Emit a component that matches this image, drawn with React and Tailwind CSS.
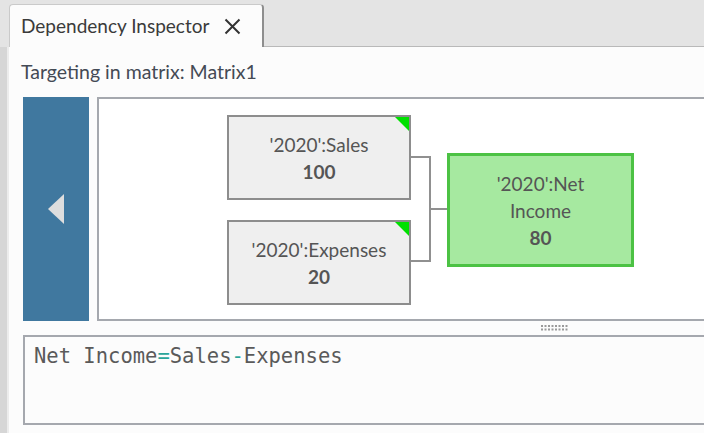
import React from 'react';

const ui = "font-['Lato','Liberation_Sans',sans-serif]";

// one node of the dependency graph
const Node = ({ className, label, value, corner }) => (
    <div className={`absolute flex flex-col items-center justify-center text-[#555] ${className}`}>
        {corner && (
            <div className="absolute top-0 right-0 w-0 h-0 border-t-[14px] border-l-[14px] border-t-[#00e000] border-l-transparent" />
        )}
        {label.map((l) => (
            <div key={l} className="text-[19px] leading-[27px]">{l}</div>
        ))}
        <div className="text-[19px] leading-[27px] font-bold">{value}</div>
    </div>
);

const Grip = () => (
    <svg width="28" height="6" viewBox="0 0 28 6">
        {[0, 1, 2, 3, 4, 5, 6, 7].map((i) => (
            <g key={i} fill="#9a9a9a">
                <rect x={i * 3.5} y="0" width="2" height="2" />
                <rect x={i * 3.5} y="3.5" width="2" height="2" />
            </g>
        ))}
    </svg>
);

export default function App() {
    return (
        <div className={`w-[704px] h-[433px] overflow-hidden bg-[#e4e4e4] flex flex-col ${ui}`}>
            {/* tab bar */}
            <div className="h-[47px] shrink-0 flex items-end">
                <div className="w-[9px] h-full" />
                <div className="w-[255px] h-[43px] bg-[#fcfcfc] border-l border-t border-[#cacaca] border-r-2 border-r-[#8e8e8e] rounded-t-[4px] flex items-center pl-[11px] gap-[15px]">
                    <span className="text-[19px] text-[#3a3a3a] whitespace-nowrap">Dependency Inspector</span>
                    <svg width="17" height="17" viewBox="0 0 17 17" className="mt-[1px] shrink-0">
                        <path d="M1.5 1.5 L15.5 15.5 M15.5 1.5 L1.5 15.5" stroke="#333" strokeWidth="2" />
                    </svg>
                </div>
                <div className="flex-1 h-[1px] bg-[#b9b9b9]" />
            </div>

            <div className="flex-1 flex min-h-0">
                {/* left edge */}
                <div className="w-[7px] bg-[#d6d6d6] shrink-0" />
                <div className="w-[2px] bg-[#ececec] shrink-0" />

                <div className="flex-1 bg-[#fcfcfc] flex flex-col min-w-0 pl-[14px]">
                    <div className="h-[50px] flex items-center -ml-[2px] pb-[1px] text-[19.5px] text-[#444a55] whitespace-nowrap">
                        Targeting in matrix: Matrix1
                    </div>

                    <div className="flex h-[224px] shrink-0">
                        {/* back button */}
                        <div className="w-[66px] shrink-0 bg-[#40789f] flex items-center justify-center">
                            <svg width="18" height="32" viewBox="0 0 18 32">
                                <path d="M17 1 L1 16 L17 31 Z" fill="#dedede" />
                            </svg>
                        </div>
                        <div className="w-[8px] shrink-0" />
                        {/* diagram canvas */}
                        <div className="relative w-[640px] shrink-0 h-[224px] border-2 border-[#a5a8ae] border-r-0 bg-white">
                            <Node className="left-[128px] top-[16px] w-[184px] h-[85px] bg-[#efefef] border-2 border-[#8d8d8d]" label={["'2020':Sales"]} value="100" corner />
                            <Node className="left-[128px] top-[121px] w-[184px] h-[85px] bg-[#efefef] border-2 border-[#8d8d8d]" label={["'2020':Expenses"]} value="20" corner />
                            {/* connectors */}
                            <div className="absolute left-[312px] top-[57px] w-[20px] h-[106px] border-2 border-l-0 border-[#909090]" />
                            <div className="absolute left-[332px] top-[109px] w-[17px] h-[2px] bg-[#909090]" />
                            <Node className="left-[348px] top-[54px] w-[187px] h-[114px] bg-[#a6e9a0] border-[3px] border-[#4cc244]" label={["'2020':Net", 'Income']} value="80" />
                        </div>
                    </div>

                    {/* splitter */}
                    <div className="h-[14px] shrink-0 flex items-center pl-[518px]">
                        <Grip />
                    </div>

                    {/* formula */}
                    <div className="h-[90px] shrink-0 w-[700px] border-2 border-r-0 border-[#a5a8ae] pl-[9px] pt-[6px] font-['DejaVu_Sans_Mono',monospace] text-[20.5px] leading-[26px] text-[#5a5a5a] whitespace-pre">
                        Net Income<span className="text-[#2aa59a]">=</span>Sales<span className="text-[#2aa59a]">-</span>Expenses
                    </div>
                    <div className="flex-1" />
                </div>
            </div>
        </div>
    );
}
